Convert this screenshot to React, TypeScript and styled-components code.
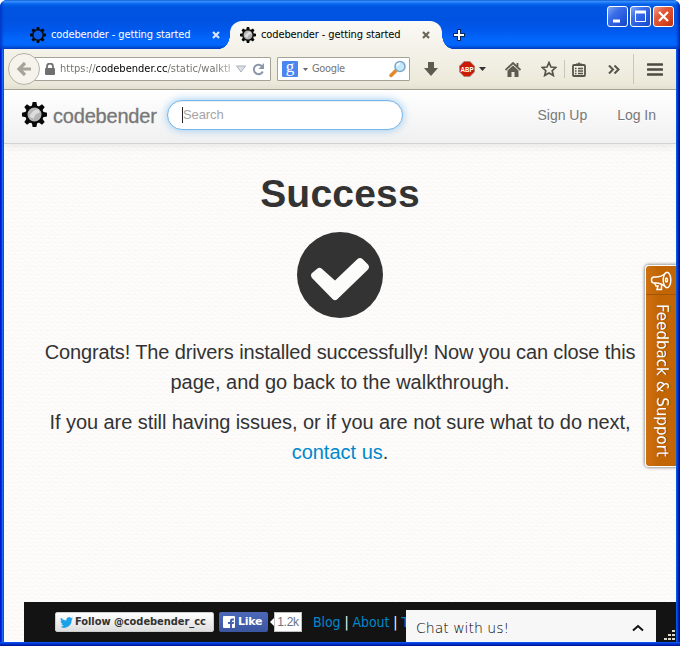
import React from "react";
import styled, { createGlobalStyle, css } from "styled-components";

const Global = createGlobalStyle`
  * { box-sizing: border-box; }
  html, body { margin: 0; padding: 0; background: #fff; }
  body { font-family: "Liberation Sans", Arial, sans-serif; overflow: hidden; }
  a { text-decoration: none; color: inherit; }
  svg { display: block; flex: none; }
`;

const Window = styled.div`
  position: relative;
  width: 680px;
  height: 646px;
  display: flex;
  flex-direction: column;
  overflow: hidden;
  border-radius: 7px 7px 0 0;
  background: #0054e3;
`;

const TitleBar = styled.header`
  flex: none;
  height: 49px;
  display: flex;
  align-items: flex-end;
  background: linear-gradient(to bottom, #0a4fc8 0, #3d95ff 1px, #2a86fc 2px, #0864ec 4px, #0055e0 7px, #0053e1 20px, #0058ec 30px, #0366fc 39px, #0366fc 45px, #0050d8 47px, #003cc0 49px);
  box-shadow: inset 4px 0 3px -2px #0038c8, inset -4px 0 3px -2px #0025b8;
`;

const chromeText = css`
  font-family: "DejaVu Sans Condensed", "DejaVu Sans", Tahoma, sans-serif;
  font-stretch: condensed;
  font-size: 11px;
  line-height: 14px;
  white-space: nowrap;
`;

const Tab = styled.div<{ $active?: boolean }>`
  position: relative;
  flex: none;
  width: ${(p) => (p.$active ? 212 : 230)}px;
  height: 28px;
  padding: 0 ${(p) => (p.$active ? "12px 0 10px" : "10px 0 30px")};
  display: flex;
  align-items: center;
  gap: 5px;
  color: ${(p) => (p.$active ? "#000" : "#fff")};
  ${(p) =>
    p.$active &&
    css`
      background: linear-gradient(#fbfaf6, #f3f1e8);
      border-radius: 12px 12px 0 0;
      &::before,
      &::after {
        content: "";
        position: absolute;
        bottom: 0;
        width: 11px;
        height: 14px;
      }
      &::before {
        left: -11px;
        background: radial-gradient(ellipse 11px 14px at 0 0, transparent 97%, #f3f1e8 100%);
      }
      &::after {
        right: -11px;
        background: radial-gradient(ellipse 11px 14px at 100% 0, transparent 97%, #f3f1e8 100%);
      }
    `}
`;

const TabTitle = styled.span`
  ${chromeText}
  flex: 1;
  letter-spacing: -0.12px;
`;

const NewTab = styled.div`
  width: 12px;
  height: 28px;
  margin-left: 11px;
  display: flex;
  align-items: center;
`;

const WindowButtons = styled.div`
  margin-left: auto;
  align-self: flex-start;
  display: flex;
  gap: 2px;
  padding: 6px 6px 0 0;
`;

const WindowButton = styled.div<{ $close?: boolean }>`
  width: 21px;
  height: 21px;
  border: 1px solid #fff;
  border-radius: 3px;
  display: flex;
  align-items: center;
  justify-content: center;
  background: ${(p) =>
    p.$close
      ? "linear-gradient(135deg, #f0a088, #e2593a 35%, #d84520 70%, #b83010)"
      : "linear-gradient(135deg, #7ea6f4, #3a6ee8 35%, #2458dc 70%, #1848c0)"};
`;

const Toolbar = styled.div`
  flex: none;
  height: 41px;
  margin: 0 4px;
  padding-left: 4px;
  display: flex;
  align-items: center;
  background: linear-gradient(#f4f2e9, #ebe8d8);
  border-bottom: 1px solid #aca899;
`;

const BackButton = styled.div`
  z-index: 1;
  flex: none;
  width: 32px;
  height: 32px;
  margin-right: -6px;
  border: 1px solid #b5b2a8;
  border-radius: 50%;
  background: #f5f3eb;
  display: flex;
  align-items: center;
  justify-content: center;
`;

const Field = styled.div<{ $width: number; $left?: number; $gap?: number }>`
  ${chromeText}
  flex: none;
  width: ${(p) => p.$width}px;
  height: 24px;
  padding-left: ${(p) => p.$left ?? 0}px;
  margin-right: ${(p) => p.$gap ?? 0}px;
  border: 1px solid #a5a298;
  border-radius: 1px;
  background: #fff;
  color: #77756e;
  display: flex;
  align-items: center;
`;

const Address = styled.span`
  width: 170px;
  margin: 0 6px 0 5px;
  overflow: hidden;
  letter-spacing: 0;
  mask-image: linear-gradient(to right, #000 155px, rgba(0, 0, 0, 0.5));
  b { font-weight: 400; color: #000; }
`;

const Reload = styled.div`
  margin-left: 6px;
`;

const Engine = styled.div`
  width: 16px;
  height: 16px;
  margin: 0 5px 0 4px;
  border-radius: 1px;
  background: #4b86ee;
  color: #fff;
  font: 400 17px/12px "Liberation Serif", serif;
  text-align: center;
`;

const Provider = styled.span`
  flex: 1;
  margin-left: 4px;
  letter-spacing: -0.35px;
`;

const ToolIcon = styled.div<{ $before: number }>`
  margin-left: ${(p) => p.$before}px;
`;

const Divider = styled.div<{ $height: number; $before: number }>`
  width: 1px;
  height: ${(p) => p.$height}px;
  margin-left: ${(p) => p.$before}px;
  background: #c9c7bc;
`;

const Page = styled.div`
  flex: 1;
  min-height: 0;
  margin: 0 4px 4px;
  display: flex;
  flex-direction: column;
  background-color: #fdfcfb;
  background-image: repeating-linear-gradient(35deg, rgba(120, 100, 80, 0.018) 0 1px, transparent 1px 4px),
    repeating-linear-gradient(to bottom, rgba(120, 100, 80, 0.015) 0 1px, transparent 1px 4px);
`;

const Navbar = styled.nav`
  z-index: 1;
  flex: none;
  height: 54px;
  padding: 0 20px 4px 18px;
  display: flex;
  align-items: center;
  background: linear-gradient(#fff, #f0f0f0);
  border-bottom: 1px solid #d2d2d2;
  box-shadow: 0 1px 10px rgba(0, 0, 0, 0.1);
`;

const Brand = styled.a`
  width: 120px;
  padding: 2px 0 0 6px;
  font-size: 20px;
  line-height: 24px;
  letter-spacing: -0.2px;
  color: #777;
  -webkit-text-stroke: 0.3px #777;
  white-space: nowrap;
`;

const SearchBox = styled.div`
  width: 236px;
  height: 30px;
  padding-left: 14px;
  border: 1px solid #74b7ee;
  border-radius: 15px;
  background: #fff;
  box-shadow: 0 0 8px rgba(82, 168, 236, 0.6), inset 0 1px 1px rgba(0, 0, 0, 0.07);
  display: flex;
  align-items: center;
  font: 13px/16px "Liberation Sans", Arial, sans-serif;
  letter-spacing: -0.1px;
  color: #a5a5a5;
  &::before {
    content: "";
    width: 1px;
    height: 16px;
    background: #222;
  }
`;

const NavLinks = styled.div`
  margin-left: auto;
  display: flex;
  gap: 30px;
  font-size: 14px;
  line-height: 20px;
  letter-spacing: -0.02px;
  color: #777;
  text-shadow: 0 1px 0 #fff;
`;

const Content = styled.main`
  flex: 1;
  display: flex;
  flex-direction: column;
  align-items: center;
  padding-top: 30px;
  color: #333;
`;

const Heading = styled.h1`
  margin: 0 0 18px;
  font-size: 39px;
  line-height: 40px;
  font-weight: 700;
  letter-spacing: 0.2px;
`;

const Message = styled.div`
  margin-top: 19px;
`;

const Lead = styled.p<{ $tracking: number }>`
  margin: 0 0 10px;
  font-size: 20px;
  line-height: 30px;
  text-align: center;
  white-space: nowrap;
  span { letter-spacing: ${(p) => p.$tracking}px; }
  a { color: #0088cc; }
`;

const Footer = styled.footer`
  flex: none;
  height: 40px;
  margin-left: 20px;
  padding-left: 31px;
  display: flex;
  align-items: center;
  background: #131313;
`;

const FollowButton = styled.a`
  flex: none;
  width: 159px;
  height: 20px;
  padding-left: 4px;
  display: flex;
  align-items: center;
  gap: 2px;
  border: 1px solid #ccc;
  border-radius: 2px;
  background: linear-gradient(#fff, #dedede);
  font: 700 11px/18px "DejaVu Sans Condensed", "DejaVu Sans", Verdana, sans-serif;
  font-stretch: condensed;
  letter-spacing: -0.05px;
  color: #333;
  white-space: nowrap;
`;

const LikeButton = styled.a`
  flex: none;
  width: 49px;
  height: 20px;
  margin-left: 5px;
  padding-left: 4px;
  display: flex;
  align-items: center;
  gap: 3px;
  border-radius: 2px;
  background: linear-gradient(#4c69ba, #3b55a0);
  font: 700 11px/20px "DejaVu Sans", Verdana, sans-serif;
  letter-spacing: -0.3px;
  color: #fff;
`;

const LikeCount = styled.div`
  flex: none;
  display: flex;
  align-items: center;
  margin-left: 2px;
  &::before {
    content: "";
    border: 4px solid transparent;
    border-left: 0;
    border-right-color: #fff;
  }
  span {
    width: 28px;
    height: 20px;
    border: 1px solid #c1c1c1;
    background: #fff;
    color: #6a7180;
    font: 12px/18px "Liberation Sans", Arial, sans-serif;
    letter-spacing: -0.3px;
    text-align: center;
  }
`;

const FooterLinks = styled.div`
  flex: none;
  width: 93px;
  margin-left: 11px;
  overflow: hidden;
  white-space: nowrap;
  font: 14px/20px "DejaVu Sans Condensed", "DejaVu Sans", Verdana, sans-serif;
  font-stretch: condensed;
  letter-spacing: -0.08px;
  color: #fff;
  a { color: #0088cc; }
`;

const ChatBar = styled.div`
  align-self: flex-end;
  flex: none;
  width: 250px;
  height: 32px;
  padding: 3px 12px 0 10px;
  display: flex;
  align-items: center;
  justify-content: space-between;
  background: #f7f7f7;
  color: #000;
  font: 200 14px/20px "DejaVu Sans", Verdana, sans-serif;
`;

const Grip = styled.div`
  align-self: flex-end;
  margin: 0 0 1px 8px;
`;

const Feedback = styled.aside`
  position: absolute;
  z-index: 2;
  right: 4px;
  top: 265px;
  width: 31px;
  height: 202px;
  border: 1px solid #fff;
  border-right: 0;
  border-radius: 4px 0 0 4px;
  background: linear-gradient(to right, #cf700f, #c26605 40%, #c26605);
  box-shadow: 0 0 3px 1px rgba(0, 0, 0, 0.4);
  display: flex;
  flex-direction: column;
  align-items: center;
  color: #fff;
`;

const FeedbackIcon = styled.div`
  width: 100%;
  height: 29px;
  padding: 5px 0 0 4px;
  border-bottom: 1px solid #a35503;
`;

const FeedbackText = styled.div`
  writing-mode: vertical-rl;
  margin: 9px 0 0 2px;
  font: 15px/20px "DejaVu Sans", Verdana, sans-serif;
  letter-spacing: 0.05px;
  text-shadow: 0 -1px 0 #7d4000;
  white-space: nowrap;
`;

const Edge = styled.div<{ $side: "left" | "right" | "bottom" }>`
  position: absolute;
  z-index: 3;
  ${(p) =>
    p.$side === "bottom"
      ? "left: 0; right: 0; bottom: 0; height: 4px; background: linear-gradient(#0a50ee 0 1px, #0038dc 1px 2px, #001ea0 3px, #00138c);"
      : p.$side === "left"
      ? "left: 0; top: 49px; bottom: 1px; width: 4px; background: linear-gradient(to right, #0019cf 0 1px, #0831d9 1px 2px, #166aee 2px 3px, #0855dd 3px);"
      : "right: 0; top: 49px; bottom: 1px; width: 4px; background: linear-gradient(to right, #0455e8 0 1px, #003ddc 1px 2px, #001fae 2px 3px, #00138c 3px);"}
`;

const Gear = ({ size, fill, shine = true }: { size: number; fill: string; shine?: boolean }) => (
  <svg width={size} height={size} viewBox="-12 -12 24 24">
    {[0, 45, 90, 135, 180, 225, 270, 315].map((a) => (
      <path key={a} d="M-2.6-8L-1.8-12H1.8L2.6-8z" transform={`rotate(${a})`} fill="#080808" />
    ))}
    <circle r="7.8" fill={fill} stroke="#080808" strokeWidth="2.2" />
    {shine && <path d="M-5 2Q-2-5 4-5L5-2 1 0-1 4Z" fill="#dcdcdc" />}
  </svg>
);

const CloseMark = ({ color }: { color: string }) => (
  <svg width="8" height="8" viewBox="0 0 8 8">
    <path d="M1 1L7 7M7 1L1 7" stroke={color} strokeWidth="2.2" />
  </svg>
);

export default function App() {
  return (
    <>
      <Global />
      <Window>
        <TitleBar>
          <Tab>
            <Gear size={16} fill="#0a5be8" shine={false} />
            <TabTitle>codebender - getting started</TabTitle>
            <CloseMark color="#d5e6ff" />
          </Tab>
          <Tab $active>
            <Gear size={16} fill="#b5b5b5" />
            <TabTitle>codebender - getting started</TabTitle>
            <CloseMark color="#6a6759" />
          </Tab>
          <NewTab>
            <svg width="12" height="12" viewBox="0 0 12 12">
              <path d="M6 0V12M0 6H12" stroke="#07275d" strokeWidth="4" />
              <path d="M6 1V11M1 6H11" stroke="#fff" strokeWidth="2" />
            </svg>
          </NewTab>
          <WindowButtons>
            <WindowButton>
              <svg width="17" height="17"><path d="M4 13H11" stroke="#fff" strokeWidth="3" /></svg>
            </WindowButton>
            <WindowButton>
              <svg width="17" height="17"><path d="M3.5 3V13.5H13.5V3" fill="none" stroke="#fff" /><path d="M3 4H14" stroke="#fff" strokeWidth="3" /></svg>
            </WindowButton>
            <WindowButton $close>
              <svg width="17" height="17"><path d="M4 4L13 13M13 4L4 13" stroke="#fff" strokeWidth="2.2" /></svg>
            </WindowButton>
          </WindowButtons>
        </TitleBar>

        <Toolbar>
          <BackButton>
            <svg width="16" height="16" viewBox="0 0 16 16">
              <path d="M9 2L3 8L9 14M3 8H15" fill="none" stroke="#a7a499" strokeWidth="3.2" />
            </svg>
          </BackButton>
          <Field $width={237} $left={10} $gap={6}>
            <svg width="10" height="12" viewBox="0 0 10 12">
              <path d="M2 6V3.5a3 3 0 0 1 6 0V6" fill="none" stroke="#6f6f6f" strokeWidth="1.8" />
              <rect y="5" width="10" height="7" rx="1" fill="#6f6f6f" />
            </svg>
            <Address>https://<b>codebender.cc</b>/static/walkthrough</Address>
            <svg width="10" height="8" viewBox="0 0 10 8"><path d="M.5 1H9.5L5 7z" fill="#dde1e6" stroke="#a9b2be" /></svg>
            <Reload>
              <svg width="13" height="13" viewBox="0 0 13 13">
                <path d="M10 3.2A4.7 4.7 0 1 0 10.8 8.5" fill="none" stroke="#8b97ab" strokeWidth="2" />
                <path d="M12 0V6H6.5z" fill="#8b97ab" />
              </svg>
            </Reload>
          </Field>
          <Field $width={133}>
            <Engine>g</Engine>
            <svg width="5" height="3"><path d="M0 0H5L2.5 3z" fill="#666" /></svg>
            <Provider>Google</Provider>
            <svg width="20" height="18" viewBox="0 0 20 18">
              <path d="M2 15.5L7 10.5" stroke="#e08a2c" strokeWidth="3.5" strokeLinecap="round" />
              <circle cx="11" cy="6.5" r="5" fill="#c5e9fa" stroke="#7da7c8" strokeWidth="1.5" />
              <path d="M8 6a3 3 0 0 1 3-2.5" fill="none" stroke="#fff" strokeWidth="1.5" />
            </svg>
          </Field>
          <ToolIcon $before={14}>
            <svg width="14" height="14" viewBox="0 0 14 14"><path d="M4 0H10V6H14L7 14L0 6H4z" fill="#5d5b50" /></svg>
          </ToolIcon>
          <ToolIcon $before={21}>
            <svg width="16" height="16" viewBox="0 0 16 16">
              <path d="M5 0H11L16 5V11L11 16H5L0 11V5z" fill="#a9a39d" />
              <path d="M5.2.8H10.8L15.2 5.2V10.8L10.8 15.2H5.2L.8 10.8V5.2z" fill="#cb1a05" />
              <text x="8" y="11" textAnchor="middle" textLength="13" lengthAdjust="spacingAndGlyphs" fontFamily="Liberation Sans" fontWeight="700" fontSize="8" fill="#fff">ABP</text>
            </svg>
          </ToolIcon>
          <ToolIcon $before={4}>
            <svg width="7" height="4"><path d="M0 0H7L3.5 4z" fill="#333" /></svg>
          </ToolIcon>
          <ToolIcon $before={19}>
            <svg width="16" height="15" viewBox="0 0 16 15">
              <path d="M.5 8L8 1L15.5 8M12.5 1V5" fill="none" stroke="#5d5b50" strokeWidth="1.8" />
              <path d="M2.5 8.5L8 3.5L13.5 8.5V15H9.5V10H6.5V15H2.5z" fill="#5d5b50" />
            </svg>
          </ToolIcon>
          <ToolIcon $before={20}>
            <svg width="16" height="16" viewBox="0 0 16 16">
              <path d="M8 1.5L10 6L14.8 6.5L11.2 9.7L12.3 14.5L8 12L3.7 14.5L4.8 9.7L1.2 6.5L6 6z" fill="none" stroke="#55534a" strokeWidth="1.7" />
            </svg>
          </ToolIcon>
          <Divider $height={18} $before={7} />
          <ToolIcon $before={7}>
            <svg width="14" height="15" viewBox="0 0 14 15">
              <rect x="1" y="3" width="12" height="11" rx="1" fill="none" stroke="#55534a" strokeWidth="1.8" />
              <path d="M4 3.5V1.5H6L7 0L8 1.5H10V3.5z" fill="#55534a" />
              <path d="M3 6.500H4.500M6 6.500H11M3 9H4.500M6 9H11M3 11.500H4.500M6 11.500H11" stroke="#55534a" strokeWidth="1.3" />
            </svg>
          </ToolIcon>
          <ToolIcon $before={22}>
            <svg width="12" height="9" viewBox="0 0 12 9"><path d="M1 .5L5 4.500L1 8.500M6.500 .5L10.500 4.500L6.500 8.500" fill="none" stroke="#55534a" strokeWidth="2" /></svg>
          </ToolIcon>
          <Divider $height={30} $before={13} />
          <ToolIcon $before={13}>
            <svg width="16" height="13"><path d="M1 1.500H15M1 6.500H15M1 11.500H15" stroke="#4c4a43" strokeWidth="2.600" strokeLinecap="round" /></svg>
          </ToolIcon>
        </Toolbar>

        <Page>
          <Navbar>
            <Gear size={25} fill="#b5b5b5" />
            <Brand>codebender</Brand>
            <SearchBox>Search</SearchBox>
            <NavLinks><a>Sign Up</a><a>Log In</a></NavLinks>
          </Navbar>
          <Content>
            <Heading>Success</Heading>
            <svg width="86" height="86" viewBox="0 0 86 86">
              <circle cx="43" cy="43" r="43" fill="#333" />
              <path d="M14 43Q14 42 15 41L20.500 36.500Q22.500 35 24.500 36.500L38 48.500L60.500 27Q63 25 65.500 27L71 32.500Q73 35 71 37.500L40 67.500Q38 69 36 67.500L15 46Q14 45 14 43z" fill="#fcfcfb" />
            </svg>
            <Message>
              <Lead $tracking={-0.135}><span>Congrats! The drivers installed successfully! Now you can close this</span><br />page, and go back to the walkthrough.</Lead>
              <Lead $tracking={-0.07}><span>If you are still having issues, or if you are not sure what to do next,</span><br /><a>contact us</a>.</Lead>
            </Message>
          </Content>
          <Footer>
            <FollowButton>
              <svg width="13" height="11" viewBox="0 0 24 20">
                <path d="M24 2.400c-.9.400-1.800.7-2.800.8 1-.6 1.800-1.600 2.200-2.700-1 .6-2 1-3.100 1.200A4.900 4.900 0 0 0 11.900 6.200C7.700 6 4.100 4.100 1.700 1.200.4 3.400 1 6.300 3.200 7.800c-.8 0-1.600-.2-2.200-.6 0 2.300 1.600 4.400 3.900 4.900-.7.200-1.500.2-2.200.1.600 2 2.400 3.400 4.600 3.400A9.900 9.900 0 0 1 0 17.600 14 14 0 0 0 21.500 5c1-.7 1.800-1.600 2.500-2.600z" fill="#1ba1e8" />
              </svg>
              Follow @codebender_cc
            </FollowButton>
            <LikeButton>
              <svg width="12" height="12" viewBox="0 0 12 12">
                <rect width="12" height="12" rx="1" fill="#fff" />
                <path d="M7 12V8H5V6H7V4.500Q7 2.500 9 2.500H11V4.500H9.500Q9 4.500 9 5V6H11L10.700 8H9V12z" fill="#4661ad" />
              </svg>
              Like
            </LikeButton>
            <LikeCount><span>1.2k</span></LikeCount>
            <FooterLinks><a>Blog</a> | <a>About</a> | <a>T</a></FooterLinks>
            <ChatBar>
              Chat with us!
              <svg width="12" height="8" viewBox="0 0 12 8"><path d="M1 6.500L6 2L11 6.500" fill="none" stroke="#111" strokeWidth="2" /></svg>
            </ChatBar>
            <Grip>
              <svg width="11" height="11" fill="#ddd9c8">
                <path d="M8 0h3v2h-3zM4 4h3v2h-3zM8 4h3v2h-3zM0 8h3v2h-3zM4 8h3v2h-3zM8 8h3v2h-3z" />
              </svg>
            </Grip>
          </Footer>
        </Page>
        <Feedback>
          <FeedbackIcon>
            <svg width="23" height="21" viewBox="0 0 23 21" fill="none" stroke="#fff" strokeWidth="1.5">
              <path d="M16 2Q11 6 6 6H4Q1.500 6 1.500 9Q1.500 12 4 12H6Q11 12 16 16" />
              <ellipse cx="17" cy="9" rx="3.800" ry="7.800" />
              <ellipse cx="16.500" cy="9" rx="1" ry="2" />
              <path d="M4.500 12L6 15H8L7 18.500H11.500V14" />
            </svg>
          </FeedbackIcon>
          <FeedbackText>Feedback &amp; Support</FeedbackText>
        </Feedback>
        <Edge $side="left" />
        <Edge $side="right" />
        <Edge $side="bottom" />
      </Window>
    </>
  );
}
